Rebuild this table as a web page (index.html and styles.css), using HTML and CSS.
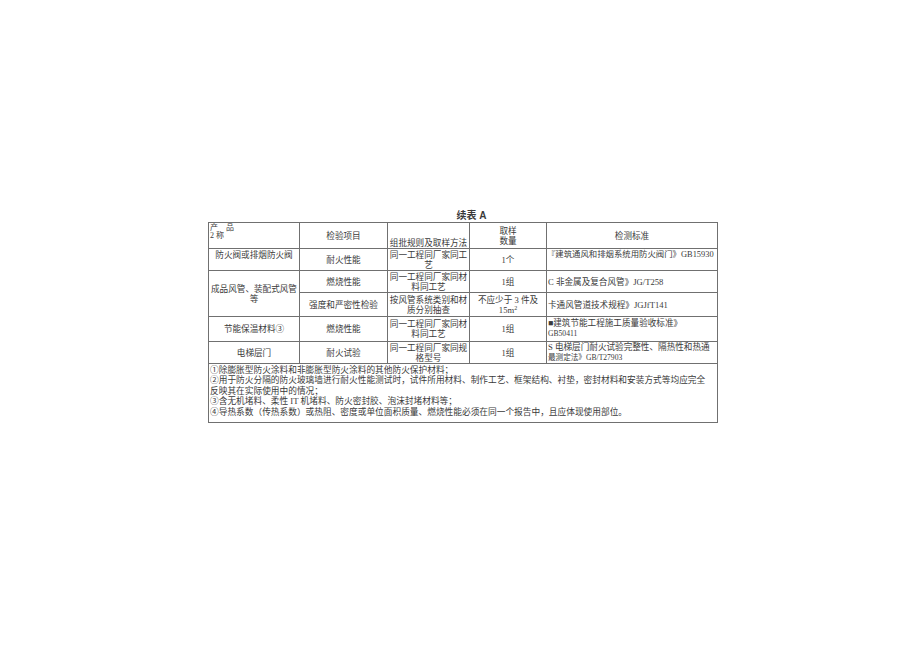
FILE: index.html
```html
<!DOCTYPE html>
<html lang="zh">
<head>
<meta charset="utf-8">
<title>续表A</title>
<link rel="stylesheet" href="styles.css">
</head>
<body>
<div class="page">
  <div class="doc">
    <div class="title">续表 A</div>
    <table class="grid">
      <colgroup>
        <col class="c1"><col class="c2"><col class="c3"><col class="c4"><col class="c5">
      </colgroup>
      <tr class="r-head">
        <td class="top left small">产　品<br>2 称</td>
        <td>检验项目</td>
        <td class="bottom">组批规则及取样方法</td>
        <td>取样<br>数量</td>
        <td>检测标准</td>
      </tr>
      <tr class="r1">
        <td class="top">防火阀或排烟防火阀</td>
        <td>耐火性能</td>
        <td>同一工程同厂家同工<br>艺</td>
        <td>1个</td>
        <td class="top left tight">『建筑通风和排烟系统用防火阀门》GB15930</td>
      </tr>
      <tr class="r2">
        <td rowspan="2">成品风管、装配式风管<br>等</td>
        <td>燃烧性能</td>
        <td>同一工程同厂家同材<br>料同工艺</td>
        <td>1组</td>
        <td class="left">C 非金属及复合风管》JG/T258</td>
      </tr>
      <tr class="r3">
        <td>强度和严密性检验</td>
        <td>按风管系统类别和材<br>质分别抽查</td>
        <td>不应少于 3 件及<br>15m<sup>2</sup></td>
        <td class="left">卡通风管道技术规程》JGJfT141</td>
      </tr>
      <tr class="r4">
        <td>节能保温材料③</td>
        <td>燃烧性能</td>
        <td>同一工程同厂家同材<br>料同工艺</td>
        <td>1组</td>
        <td class="top left">■建筑节能工程施工质量验收标准》<br><span class="tiny">GB50411</span></td>
      </tr>
      <tr class="r5">
        <td>电梯层门</td>
        <td>耐火试验</td>
        <td>同一工程同厂家同规<br>格型号</td>
        <td>1组</td>
        <td class="left">S 电梯层门耐火试验完整性、隔热性和热通<br><span class="tiny">最测定法》GB/T27903</span></td>
      </tr>
      <tr class="r-notes">
        <td colspan="5" class="notes">①除膨胀型防火涂料和非膨胀型防火涂料的其他防火保护材料；<br>②用于防火分隔的防火玻璃墙进行耐火性能测试时，试件所用材料、制作工艺、框架结构、衬垫，密封材料和安装方式等均应完全<br>反映其在实际使用中的情况；<br>③含无机堵料、柔性 IT 机堵料、防火密封胶、泡沫封堵材料等；<br>④导热系数（传热系数）或热阻、密度或单位面积质量、燃烧性能必须在同一个报告中，且应体现使用部位。</td>
      </tr>
    </table>
  </div>
</div>
</body>
</html>
```

FILE: styles.css
```css
html, body {
  margin: 0;
  padding: 0;
  background: #ffffff;
}

.page {
  padding: 210px 0 0 208px;
}

.doc {
  width: 509px;
  display: flex;
  flex-direction: column;
}

.title {
  height: 12px;
  line-height: 12px;
  text-align: center;
  padding-left: 18px;
  font-family: "Liberation Sans", "Noto Sans CJK SC", sans-serif;
  font-size: 10px;
  font-weight: bold;
  color: #3a3a3a;
}

.grid {
  border-collapse: collapse;
  table-layout: fixed;
  width: 509px;
  font-family: "Liberation Serif", "Noto Sans CJK SC", serif;
  font-size: 8.6px;
  line-height: 10px;
  color: #3a3a3a;
}

.c1 { width: 91px; }
.c2 { width: 88px; }
.c3 { width: 82px; }
.c4 { width: 77px; }
.c5 { width: 171px; }

.grid td {
  border: 1px solid #707070;
  padding: 0 1px;
  text-align: center;
  vertical-align: middle;
  white-space: nowrap;
  overflow: hidden;
}

.grid td.top { vertical-align: top; padding-top: 1px; }
.grid td.bottom { vertical-align: bottom; padding-bottom: 0; }
.grid td.left { text-align: left; }
.grid td.tight { padding-left: 0; padding-right: 0; font-size: 8.4px; }
.grid td.small { font-size: 8px; line-height: 7.5px; padding-top: 1px; }

.r-head td { height: 24px; }
.r1 td { height: 20px; }
.r2 td { height: 21px; }
.r3 td { height: 23px; }
.r4 td { height: 23px; }
.r5 td { height: 20px; }
.r-notes td { height: 57px; }

.tiny { font-size: 7.6px; }

.grid sup {
  font-size: 6px;
  line-height: 0;
  vertical-align: 3px;
}

.grid td.notes {
  text-align: left;
  vertical-align: top;
  padding: 1px 1px 0 1px;
  line-height: 10.4px;
  font-size: 8.7px;
}
```
